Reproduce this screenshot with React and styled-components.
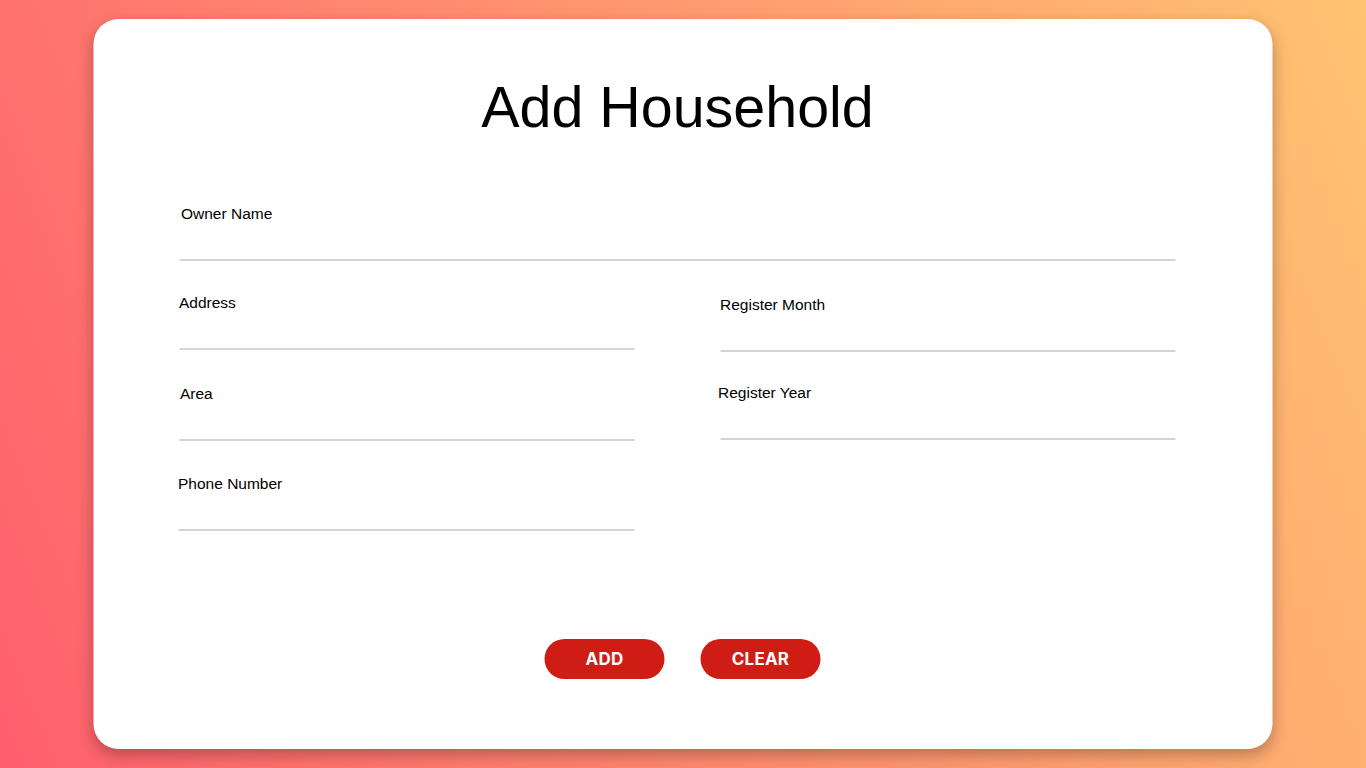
import React from "react";
import styled, { createGlobalStyle } from "styled-components";

const GlobalStyle = createGlobalStyle`
  * { box-sizing: border-box; }
  html, body { margin: 0; padding: 0; }
  body {
    min-height: 768px;
    background: linear-gradient(68deg, #ff5f6d, #ffc371);
    font-family: "Liberation Sans", Arial, sans-serif;
  }
`;

const Page = styled.div`
  min-height: 768px;
  padding-top: 19px;
  display: flex;
  justify-content: center;
  align-items: flex-start;
`;

const Card = styled.div`
  width: 1179px;
  height: 730px;
  background: #fff;
  border-radius: 25px;
  box-shadow: 0 6px 16px rgba(0, 0, 0, 0.28);
  padding: 60px 97px 70px 86px;
  display: flex;
  flex-direction: column;
  transform: translateX(-0.5px);
`;

const Title = styled.h1`
  margin: 0 0 0 1px;
  font-family: "Liberation Sans", Arial, sans-serif;
  font-weight: 400;
  font-size: 57.4px;
  line-height: 57px;
  color: #000;
  text-align: center;
`;

const Form = styled.div`
  margin-top: 67px;
  display: grid;
  grid-template-columns: 455px 455px;
  column-gap: 86px;
  row-gap: 33px;
`;

const Field = styled.div`
  display: flex;
  flex-direction: column;
  grid-column: ${(p) => (p.$full ? "1 / span 2" : "auto")};
  margin-top: ${(p) => p.$dy || 0}px;
  margin-bottom: ${(p) => -(p.$dy || 0)}px;
`;

const Label = styled.label`
  font-size: 15.5px;
  line-height: 20px;
  color: #000;
  margin-left: ${(p) => p.$indent || 0}px;
`;

const Input = styled.input`
  height: 37px;
  border: none;
  border-bottom: 2px solid #d4d4d4;
  outline: none;
  background: transparent;
  font-family: inherit;
  font-size: 16px;
  padding: 0;
  margin-left: ${(p) => p.$indent || 0}px;
`;

const Actions = styled.div`
  margin-top: 109px;
  display: flex;
  justify-content: center;
  gap: 36px;
  padding-left: 11px;
`;

const Button = styled.button`
  width: 120px;
  height: 40px;
  border: none;
  border-radius: 20px;
  background: #cf1d15;
  color: #fff;
  font-family: Inter, "Open Sans", sans-serif;
  font-weight: 700;
  font-size: 17px;
  letter-spacing: 0.2px;
  cursor: pointer;
`;

export default function App() {
  return (
    <>
      <GlobalStyle />
      <Page>
        <Card>
          <Title>Add Household</Title>
          <Form>
            <Field $full $dy={1}>
              <Label $indent={2}>Owner Name</Label>
              <Input />
            </Field>
            <Field>
              <Label>Address</Label>
              <Input />
            </Field>
            <Field $dy={2}>
              <Label>Register Month</Label>
              <Input />
            </Field>
            <Field $dy={1}>
              <Label $indent={1}>Area</Label>
              <Input />
            </Field>
            <Field>
              <Label $indent={-2}>Register Year</Label>
              <Input />
            </Field>
            <Field $dy={1}>
              <Label $indent={-1}>Phone Number</Label>
              <Input $indent={-1} />
            </Field>
          </Form>
          <Actions>
            <Button>ADD</Button>
            <Button>CLEAR</Button>
          </Actions>
        </Card>
      </Page>
    </>
  );
}
